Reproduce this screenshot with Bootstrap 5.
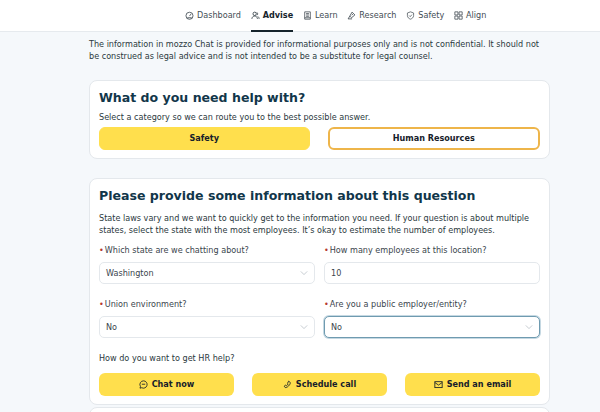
<!DOCTYPE html>
<html lang="en">
  <head>
    <meta charset="UTF-8" />
    <meta name="viewport" content="width=device-width, initial-scale=1" />
    <title>Advise</title>
    <link
      href="https://cdn.jsdelivr.net/npm/bootstrap@5.3.2/dist/css/bootstrap.min.css"
      rel="stylesheet"
    />
    <style>
      html,
      body {
        height: 412px;
        overflow: hidden;
      }
      body {
        background-color: #f5f8fb;
        color: #2b3940;
        font-family: "DejaVu Sans", sans-serif;
        font-size: 8.1px;
        line-height: 12px;
      }
      .top-bar {
        height: 32px;
        background: #fff;
        border-bottom: 1px solid #e6eaee;
        padding-left: 185px;
      }
      .top-link {
        height: 32px;
        color: #434d54;
        text-decoration: none;
        margin-right: 9.8px;
        gap: 3px;
        border-bottom: 2px solid transparent;
      }
      .top-link svg {
        width: 9px;
        height: 9px;
        flex: none;
      }
      .top-link.is-active {
        color: #16242c;
        font-weight: 700;
        border-bottom-color: #16242c;
      }
      .page-body {
        height: 380px;
        overflow: hidden;
        padding: 6px 50px 0 89px;
      }
      .disclaimer {
        margin-bottom: 18px;
      }
      .panel {
        background: #fff;
        border: 1px solid #e4e8ec;
        border-radius: 8px;
        padding: 8px 9px;
      }
      .panel-first {
        height: 79px;
        margin-bottom: 19px;
      }
      .panel-second {
        height: 227px;
      }
      .panel-title {
        color: #11364a;
        font-size: 12.55px;
        font-weight: 700;
        line-height: 18px;
        margin: 0 0 4px;
      }
      .panel-second .panel-title {
        margin-bottom: 7px;
      }
      .choice-row {
        gap: 18px;
        margin-top: 4px;
      }
      .choice-btn {
        flex: 1 1 0;
        height: 23px;
        border-radius: 6px;
        font-size: 8.1px;
        font-weight: 700;
        color: #16202a;
        padding: 0;
        background: #ffdf4d;
        border: 1px solid #ffdf4d;
      }
      .choice-btn.is-outline {
        background: #fff;
        border: 2px solid #eeb54a;
      }
      .field-grid {
        display: grid;
        grid-template-columns: 1fr 1fr;
        column-gap: 9px;
        row-gap: 14px;
        margin-top: 8px;
      }
      .field-label {
        display: block;
        margin-bottom: 6px;
        color: #3a454d;
      }
      .req {
        color: #b5392f;
        margin-right: 1px;
      }
      .field-box {
        height: 22px;
        border: 1px solid #e4e8ec;
        border-radius: 5px;
        padding: 0 6px;
        color: #3a454d;
        background: #fff;
      }
      .field-box.is-focus {
        border: 1px solid #6f9bb0;
        box-shadow: 0 0 0 1px #c5d8e2;
      }
      .chev {
        width: 8px;
        height: 8px;
      }
      .how-label {
        margin: 14px 0 9px;
      }
      .action-row {
        gap: 18px;
      }
      .action-btn {
        flex: 1 1 0;
        height: 23px;
        border: 0;
        border-radius: 6px;
        background: #ffdf4d;
        color: #16202a;
        font-size: 8.1px;
        font-weight: 700;
        padding: 0;
        gap: 4px;
      }
      .action-btn svg {
        width: 9px;
        height: 9px;
      }
      .panel-third {
        height: 40px;
        margin-top: 2px;
      }
    </style>
  </head>
  <body>
    <nav class="top-bar d-flex align-items-start">
      <a class="top-link d-flex align-items-center" href="#">
        <svg viewBox="0 0 16 16" fill="none" stroke="currentColor" stroke-width="1.5"><circle cx="8" cy="8.500" r="6.300"/><path d="M8 9l3-4M4 12h8"/></svg>
        Dashboard
      </a>
      <a class="top-link is-active d-flex align-items-center" href="#">
        <svg viewBox="0 0 16 16" fill="none" stroke="currentColor" stroke-width="1.3"><circle cx="6.500" cy="5" r="3"/><path d="M1.500 14c.5-3.500 2.500-5 5-5s4.500 1.500 5 5M10.500 2.500a3 3 0 0 1 0 5M12 9.500c1.500.8 2.300 2.300 2.500 4.500"/></svg>
        Advise
      </a>
      <a class="top-link d-flex align-items-center" href="#">
        <svg viewBox="0 0 16 16" fill="none" stroke="currentColor" stroke-width="1.4"><path d="M3 1.500h10v13H3zM5.500 4.500h5M5.500 7h5M5.500 9.500h5M3 12h10"/></svg>
        Learn
      </a>
      <a class="top-link d-flex align-items-center" href="#">
        <svg viewBox="0 0 16 16" fill="none" stroke="currentColor" stroke-width="1.5"><path d="M9 2l5 5-6 5-3-3zM5 9l-3 5h7M8.500 7.500l2-2"/></svg>
        Research
      </a>
      <a class="top-link d-flex align-items-center" href="#">
        <svg viewBox="0 0 16 16" fill="none" stroke="currentColor" stroke-width="1.3"><path d="M8 1.500l5.500 2v4.500c0 3.500-2.500 5.500-5.500 6.500-3-1-5.500-3-5.500-6.500V3.500z"/><path d="M5.500 8l2 2 3-3.500"/></svg>
        Safety
      </a>
      <a class="top-link d-flex align-items-center" href="#">
        <svg viewBox="0 0 16 16" fill="none" stroke="currentColor" stroke-width="1.4"><path d="M1.500 1.500H7V7H1.500zM9 1.500h5.500V7H9zM1.500 9H7v5.500H1.500zM9 9h5.500v5.500H9z"/></svg>
        Align
      </a>
    </nav>

    <main class="page-body">
      <p class="disclaimer">
        The information in mozzo Chat is provided for informational purposes only and is not confidential. It should not be construed as legal advice and is not intended to be a substitute for legal counsel.
      </p>

      <section class="panel panel-first">
        <h2 class="panel-title">What do you need help with?</h2>
        <div>Select a category so we can route you to the best possible answer.</div>
        <div class="choice-row d-flex">
          <button type="button" class="btn choice-btn">Safety</button>
          <button type="button" class="btn choice-btn is-outline">Human Resources</button>
        </div>
      </section>

      <section class="panel panel-second">
        <h2 class="panel-title">Please provide some information about this question</h2>
        <div>State laws vary and we want to quickly get to the information you need. If your question is about multiple states, select the state with the most employees. It’s okay to estimate the number of employees.</div>
        <div class="field-grid">
          <div>
            <label class="field-label"><span class="req">•</span>Which state are we chatting about?</label>
            <div class="field-box d-flex align-items-center justify-content-between">Washington
              <svg class="chev" viewBox="0 0 10 10" fill="none" stroke="#b9c0c6"><path d="M1 3l4 4 4-4"/></svg>
            </div>
          </div>
          <div>
            <label class="field-label"><span class="req">•</span>How many employees at this location?</label>
            <div class="field-box d-flex align-items-center">10</div>
          </div>
          <div>
            <label class="field-label"><span class="req">•</span>Union environment?</label>
            <div class="field-box d-flex align-items-center justify-content-between">No
              <svg class="chev" viewBox="0 0 10 10" fill="none" stroke="#b9c0c6"><path d="M1 3l4 4 4-4"/></svg>
            </div>
          </div>
          <div>
            <label class="field-label"><span class="req">•</span>Are you a public employer/entity?</label>
            <div class="field-box is-focus d-flex align-items-center justify-content-between">No
              <svg class="chev" viewBox="0 0 10 10" fill="none" stroke="#b9c0c6"><path d="M1 3l4 4 4-4"/></svg>
            </div>
          </div>
        </div>
        <div class="how-label">How do you want to get HR help?</div>
        <div class="action-row d-flex">
          <button type="button" class="btn action-btn d-flex align-items-center justify-content-center">
            <svg viewBox="0 0 16 16" fill="none" stroke="currentColor" stroke-width="1.5"><path d="M8 1.500a6.500 6.500 0 1 1-3.200 12.200L1.800 14.500l.8-3A6.500 6.500 0 0 1 8 1.500z"/><path d="M5 7.500h6"/></svg>
            Chat now
          </button>
          <button type="button" class="btn action-btn d-flex align-items-center justify-content-center">
            <svg viewBox="0 0 16 16" fill="none" stroke="currentColor" stroke-width="1.5"><path d="M10 2l3 2.500c0 2-1 4-3 6s-4 3-6 3L2 11l3-2 1.200 1c1-.5 2.600-2.100 3-3L8 6z"/></svg>
            Schedule call
          </button>
          <button type="button" class="btn action-btn d-flex align-items-center justify-content-center">
            <svg viewBox="0 0 16 16" fill="none" stroke="currentColor" stroke-width="1.5"><rect x="1.500" y="3" width="13" height="10.500"/><path d="M1.500 4.500L8 9l6.500-4.500"/></svg>
            Send an email
          </button>
        </div>
      </section>

      <section class="panel panel-third"></section>
    </main>
  </body>
</html>
